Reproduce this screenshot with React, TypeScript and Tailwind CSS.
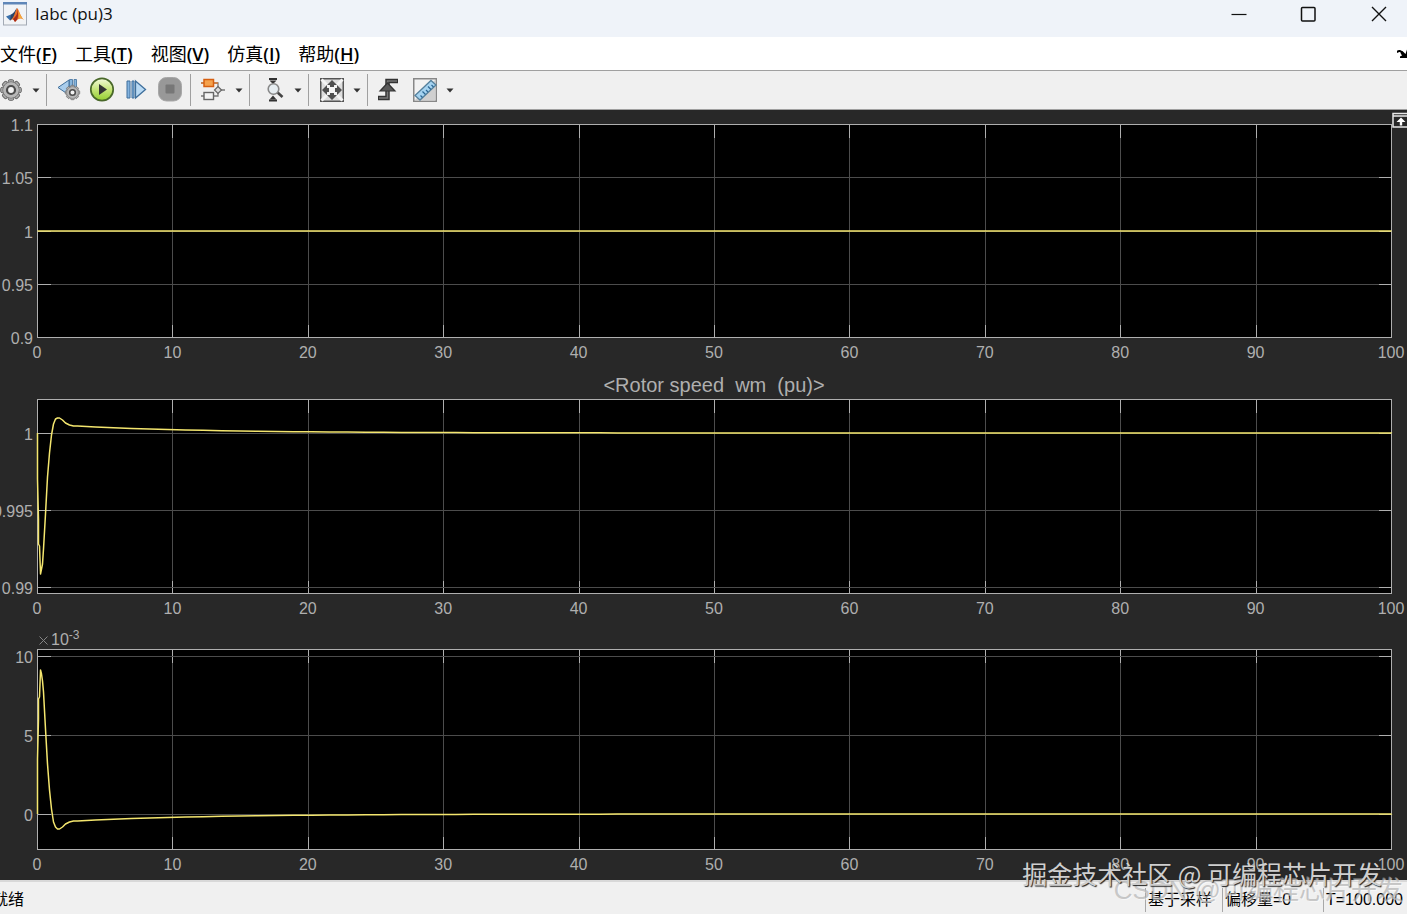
import type { ReactNode } from 'react';

type Point = [number, number];

interface ChartProps {
  label: string;
  height: number;
  yTicks: { label: string; y: number }[];
  points: Point[];
}

const X_TICKS = [0, 10, 20, 30, 40, 50, 60, 70, 80, 90, 100];
const CURVE_WIDTH = 1354;

/** Exponential settling towards a final value, sampled from x = 40 to the right edge. */
function settle(finalValue: number, amplitude: number): Point[] {
  return Array.from({ length: 74 }, (_, i): Point => {
    const x = 40 + i * 18;
    return [x, finalValue + amplitude * Math.exp(-(x - 40) / 130)];
  });
}

const ROTOR_SPEED: Point[] = [
  [0, 34], [0, 80], [1, 120], [1, 145], [2, 147], [3, 175], [4, 170], [5, 165], [6, 150], [8, 115], [10, 78], [12, 54], [14, 36],
  [16, 25], [18, 20], [20, 19], [22, 19], [25, 21], [28, 24], [32, 26], [36, 27],
  ...settle(34, -7), [1354, 34],
];

const DEVIATION: Point[] = [
  [0, 165], [0, 110], [1, 70], [1, 50], [2, 48], [3, 21], [4, 25], [5, 32], [6, 43], [8, 80], [10, 115], [12, 141], [14, 160],
  [16, 173], [18, 178], [20, 180], [22, 180], [25, 178], [28, 175], [32, 173], [36, 172],
  ...settle(165, 7), [1354, 165],
];

function Chart({ label, height, yTicks, points }: ChartProps) {
  return (
    <svg role="img" aria-label={label} className="block w-full overflow-visible" height={height + 1}>
      <g transform="translate(0.5 0.5)" shapeRendering="crispEdges">
        <rect width="100%" height={height} fill="#000" />
        {X_TICKS.slice(1, -1).map((x) => (
          <g key={x}>
            <line x1={`${x}%`} x2={`${x}%`} y1={0} y2={height} stroke="#4c4c4c" />
            <line x1={`${x}%`} x2={`${x}%`} y1={0} y2={13} stroke="#afafaf" />
            <line x1={`${x}%`} x2={`${x}%`} y1={height - 13} y2={height} stroke="#afafaf" />
          </g>
        ))}
        {yTicks.map(({ label: name, y }) => (
          <g key={name}>
            <line x1="0" x2="100%" y1={y} y2={y} stroke="#4c4c4c" />
            <line x1={0} x2={13} y1={y} y2={y} stroke="#afafaf" />
            <svg x="100%" overflow="visible">
              <line x1={-13} x2={0} y1={y} y2={y} stroke="#afafaf" />
            </svg>
          </g>
        ))}
        <rect width="100%" height={height} fill="none" stroke="#afafaf" />
      </g>
      <svg width="100%" height={height} viewBox={`0 0 ${CURVE_WIDTH} ${height}`} preserveAspectRatio="none" overflow="visible">
        <polyline
          transform="translate(0.5 0)"
          points={points.map((p) => p.join(',')).join(' ')}
          fill="none"
          stroke="#f4e66e"
          strokeWidth={1.5}
          strokeLinejoin="round"
          vectorEffect="non-scaling-stroke"
        />
      </svg>
      <g fill="#afafaf" className="font-['Liberation_Sans',sans-serif] text-base">
        {yTicks.map(({ label: name, y }) => (
          <text key={name} x={-4} y={y + 7} textAnchor="end">{name}</text>
        ))}
        {X_TICKS.map((x) => (
          <text key={x} x={`${x}%`} y={height + 21} textAnchor="middle">{x}</text>
        ))}
      </g>
    </svg>
  );
}

function ToolButton({ label, className = 'w-6', children }: { label: string; className?: string; children: ReactNode }) {
  return (
    <button type="button" aria-label={label} className={`flex h-7 shrink-0 items-center justify-center ${className}`}>
      {children}
    </button>
  );
}

function Caret({ label, className = 'ml-1.5' }: { label: string; className?: string }) {
  return (
    <button type="button" aria-label={label} className={`flex h-7 w-4 shrink-0 items-center justify-center ${className}`}>
      <svg width="8" height="5" viewBox="0 0 8 5"><path d="M0.5 0.5h7L4 4.5z" fill="#333" /></svg>
    </button>
  );
}

function Separator({ className = 'ml-0.5' }: { className?: string }) {
  return <div className={`h-8 w-px shrink-0 bg-[#a0a0a0] ${className}`} />;
}

const TEETH = [0, 45, 90, 135, 180, 225, 270, 315];

function Gear() {
  return (
    <>
      {TEETH.map((a) => (
        <rect key={a} x="-2.7" y="-10.3" width="5.4" height="5" rx="1.5" transform={`rotate(${a})`} fill="#b0b0b0" stroke="#6a6a6a" />
      ))}
      <circle r="8.2" fill="#b4b4b4" stroke="#777" />
      <circle r="7.6" fill="#b8b8b8" />
      <circle r="4" fill="#f3f3f3" stroke="#4c4c4c" strokeWidth="2.2" />
    </>
  );
}

function MatlabIcon() {
  return (
    <svg width="24" height="24" viewBox="0 0 24 24" className="shrink-0">
      <rect x="0.5" y="0.5" width="23" height="22.5" fill="#f1f3f6" stroke="#a3aab5" />
      <path d="M0 0h24v2.5H0z" fill="#5f86b8" />
      <path d="M3 14.5l5-2 3 3-4 3z" fill="#3a70ab" />
      <path d="M8 12.5c3-1 4-4.5 6-6.5l-3 9.5-4 3z" fill="#29456b" />
      <path d="M14 6c2 1 3 8 7 12-4-3-6-1-9 2-1-3-2-3-5-1.5 4-2 5-8.5 7-12.5z" fill="#e8702a" />
      <path d="M14 6c1 4 0 8-4 11l2 3c3-2 4-7 2-14z" fill="#a92b18" />
      <path d="M15 8.5c1 4 1 6.5 0 8.5 2-2 4-1 6 1-3-3-4-6-6-9.5z" fill="#f4ab37" />
    </svg>
  );
}

const MENUS = [
  { name: '文件', key: 'F' },
  { name: '工具', key: 'T' },
  { name: '视图', key: 'V' },
  { name: '仿真', key: 'I' },
  { name: '帮助', key: 'H' },
];

function TitleBar() {
  return (
    <header className="flex h-[37px] items-start justify-between bg-[#eff3f9]">
      <div className="flex items-center gap-2 pt-0.5 pl-[3px]">
        <MatlabIcon />
        <h1 className="font-['Open_Sans',sans-serif] text-[17px] leading-6 text-[#111]">Iabc (pu)3</h1>
      </div>
      <div className="flex pt-1.5 pr-5">
        <button type="button" aria-label="最小化" className="mr-[53px]">
          <svg width="16" height="16"><path d="M0.5 8.5h15" stroke="#111" strokeWidth="1.2" /></svg>
        </button>
        <button type="button" aria-label="最大化" className="mr-[55px]">
          <svg width="16" height="16"><rect x="1.5" y="1.5" width="13.5" height="13.5" rx="1" fill="none" stroke="#111" strokeWidth="1.5" /></svg>
        </button>
        <button type="button" aria-label="关闭">
          <svg width="16" height="16"><path d="M1 1l14 14M15 1L1 15" stroke="#111" strokeWidth="1.4" /></svg>
        </button>
      </div>
    </header>
  );
}

function MenuBar() {
  return (
    <nav className="flex h-[34px] items-center justify-between border-b border-[#a0a0a0] bg-white">
      <div className="flex gap-[18px]">
        {MENUS.map((m) => (
          <button key={m.key} type="button" className="font-['Open_Sans','Noto_Sans_CJK_SC',sans-serif] text-lg leading-6 text-black">
            {m.name}<span className="font-semibold">(<u className="decoration-1 underline-offset-2">{m.key}</u>)</span>
          </button>
        ))}
      </div>
      <button type="button" aria-label="停靠">
        <svg width="10" height="10" viewBox="0 0 10 10" className="block">
          <path d="M0 3.5C1.5 1 4 1.5 6 5" fill="none" stroke="#000" strokeWidth="2" />
          <path d="M10 0.5v8.5H3V7.5L5 6.500 3.500 4 5.500 2l3 3z" fill="#000" />
        </svg>
      </button>
    </nav>
  );
}

function Toolbar() {
  return (
    <div role="toolbar" className="flex h-[39px] items-center border-b border-[#a0a0a0] bg-[#f0f0f0]">
      <ToolButton label="配置属性" className="w-[22px]">
        <svg width="22" height="24" viewBox="-11 -12 22 24"><Gear /></svg>
      </ToolButton>
      <Caret label="配置属性选项" />
      <Separator />
      <ToolButton label="步进选项" className="ml-2.5 w-6">
        <svg width="24" height="24" viewBox="0 0 24 24">
          <path d="M1 9.5L12 2v15z" fill="#a9cdec" stroke="#3f6f9c" />
          <path d="M12.5 1.5h3v13h-3zM17 1.5h2.500v12H17z" fill="#86b5dc" stroke="#3f6f9c" strokeWidth="0.8" />
          <g transform="translate(15.5 14.5) scale(0.7)"><Gear /></g>
        </svg>
      </ToolButton>
      <ToolButton label="运行" className="ml-[9px] w-6">
        <svg width="26" height="26" viewBox="0 0 26 26" className="shrink-0">
          <defs>
            <linearGradient id="run" x1="0" y1="0" x2="0" y2="1">
              <stop offset="0" stopColor="#f4fadb" />
              <stop offset="0.5" stopColor="#c6e57a" />
              <stop offset="1" stopColor="#92cf2e" />
            </linearGradient>
          </defs>
          <circle cx="13" cy="12.5" r="11.2" fill="url(#run)" stroke="#49682a" strokeWidth="1.7" />
          <path d="M10 7v11l8-5.5z" fill="#333" />
        </svg>
      </ToolButton>
      <ToolButton label="步进" className="ml-2.5 w-6">
        <svg width="22" height="22" viewBox="0 0 22 22">
          <path d="M2 2h3v17H2zM7 2h2v17H7z" fill="#83b3df" stroke="#3f6f9c" />
          <path d="M10.5 2l10 8.500-10 8.500z" fill="#b9daf4" stroke="#3f6f9c" strokeWidth="1.3" />
        </svg>
      </ToolButton>
      <ToolButton label="停止" className="ml-2.5 w-6">
        <svg width="24" height="26" viewBox="0 0 24 26">
          <rect x="0.5" y="0.5" width="23" height="23.5" rx="8" fill="#989898" stroke="#a8a8a8" />
          <rect x="7.5" y="7.5" width="9" height="9" rx="1" fill="#777" />
        </svg>
      </ToolButton>
      <Separator className="ml-2" />
      <ToolButton label="突出显示模块" className="ml-2.5 w-6">
        <svg width="26" height="24" viewBox="0 0 26 24" className="shrink-0">
          <path d="M1 5h17v5M1 18h17v-4M21 12h4" fill="none" stroke="#777" strokeWidth="1.3" />
          <path d="M1 5h17" stroke="#e07a30" strokeWidth="1.3" />
          <rect x="4" y="1.5" width="9.5" height="7" fill="#f5a24d" stroke="#d65f11" strokeWidth="1.5" />
          <rect x="4" y="14.5" width="9.5" height="7" fill="#f4f4f4" stroke="#666" strokeWidth="1.4" />
          <path d="M18 8.5l3.5 3.5-3.5 3.5-3.5-3.5z" fill="#ddd" stroke="#666" strokeWidth="1.2" />
        </svg>
      </ToolButton>
      <Caret label="突出显示选项" />
      <Separator />
      <ToolButton label="缩放" className="ml-2.5 w-[30px]">
        <svg width="20" height="26" viewBox="0 0 20 26">
          <path d="M4 2h8M4 23.5h8" stroke="#333" strokeWidth="1.8" />
          <path d="M8 7L4.5 3.5h7zM8 18.500l-3.500 4h7z" fill="#333" />
          <path d="M12 15l5.5 5" stroke="#444" strokeWidth="2.6" />
          <circle cx="8.5" cy="12" r="5.3" fill="#e6edf1" stroke="#888" strokeWidth="1.6" />
        </svg>
      </ToolButton>
      <Caret label="缩放选项" className="ml-0" />
      <Separator />
      <ToolButton label="缩放至适合" className="ml-2.5 w-[26px]">
        <svg width="24" height="24" viewBox="0 0 24 24">
          <rect x="0.75" y="0.75" width="22.5" height="22.5" fill="#dedede" stroke="#555" strokeWidth="1.5" />
          <path d="M1.5 1.5l21 21M22.5 1.5l-21 21" stroke="#f4f4f4" strokeWidth="3" />
          <rect x="9" y="9" width="6" height="6" fill="#f4f4f4" />
          {[0, 90, 180, 270].map((a) => (
            <path key={a} d="M12 2l5 5h-3v2h-4V7H7z" transform={`rotate(${a} 12 12)`} fill="#505050" />
          ))}
        </svg>
      </ToolButton>
      <Caret label="适合选项" className="ml-1" />
      <Separator />
      <ToolButton label="触发器" className="ml-2 w-6">
        <svg width="22" height="24" viewBox="0 0 22 24">
          <path d="M1 20h9.5V3H21" fill="none" stroke="#333" strokeWidth="4.5" />
          <path d="M2 20h8.5V3H20" fill="none" stroke="#777" strokeWidth="1.6" />
          <path d="M10.5 5L18 13H3z" fill="#5a5a5a" stroke="#333" strokeWidth="1.2" />
        </svg>
      </ToolButton>
      <ToolButton label="测量" className="ml-[13px] w-6">
        <svg width="24" height="24" viewBox="0 0 24 24">
          <rect x="0.75" y="0.75" width="22.5" height="22.5" fill="#f2f2f2" stroke="#888" strokeWidth="1.5" />
          <path d="M1.5 22.5h21v-21z" fill="#d0d0d0" />
          <path d="M2 17.5L18 2.5l5 4.5L7 22z" fill="#a5d3f0" stroke="#55809c" strokeWidth="1.3" />
          <path d="M9.5 19.5l-2-2M12.5 16.5l-3-3M15 14l-2-2M18 11.5l-3-3M20.5 9l-2-2" stroke="#2c6794" strokeWidth="1.2" />
        </svg>
      </ToolButton>
      <Caret label="测量选项" className="ml-[5px]" />
    </div>
  );
}

export default function App() {
  return (
    <div className="relative flex min-h-screen flex-col overflow-hidden bg-[#f0f0f0]">
      <TitleBar />
      <MenuBar />
      <Toolbar />
      <main className="relative grow bg-[#282828] pt-3.5 pr-4 pb-[30px] pl-[37px]">
        <button type="button" aria-label="最大化坐标区" className="absolute top-0.5 right-0">
          <svg width="15" height="16" viewBox="0 0 15 16" className="block">
            <path d="M15 1.5H1v13.5h14M1 4h14" fill="none" stroke="#e8e8e8" strokeWidth="1.5" />
            <path d="M9 5.5l4.5 4.5h-3.3v3.5H7.800V10H4.500z" fill="#fff" />
          </svg>
        </button>
        <Chart
          label="1"
          height={213}
          yTicks={[
            { label: '1.1', y: 0 },
            { label: '1.05', y: 53 },
            { label: '1', y: 107 },
            { label: '0.95', y: 160 },
            { label: '0.9', y: 213 },
          ]}
          points={[[0, 107], [1354, 107]]}
        />
        <h2 className="mt-[35px] mb-0.5 text-center font-['Liberation_Sans',sans-serif] text-xl leading-6 whitespace-pre text-[#afafaf]">
          {'<Rotor speed  wm  (pu)>'}
        </h2>
        <Chart
          label="<Rotor speed  wm  (pu)>"
          height={194}
          yTicks={[
            { label: '1', y: 34 },
            { label: '0.995', y: 111 },
            { label: '0.99', y: 188 },
          ]}
          points={ROTOR_SPEED}
        />
        <p className="mt-8 mb-px flex h-[22px] items-center font-['Liberation_Sans',sans-serif] text-base leading-7 text-[#afafaf]">
          <svg width="9" height="9" viewBox="0 0 9 9" className="mt-1.5 mr-[3px] ml-0.5" role="img" aria-label="×">
            <path d="M0.5 0.5l8 8M8.5 0.5l-8 8" stroke="#858585" />
          </svg>
          <span className="pt-1.5">10<sup className="text-xs">-3</sup></span>
        </p>
        <Chart
          label="×10-3"
          height={200}
          yTicks={[
            { label: '10', y: 7 },
            { label: '5', y: 86 },
            { label: '0', y: 165 },
          ]}
          points={DEVIATION}
        />
      </main>
      <footer className="flex h-[34px] items-center justify-between border-t-2 border-[#d8d8d8] bg-[#f0f0f0] pt-1 font-['Liberation_Sans','Noto_Sans_CJK_SC',sans-serif] text-base leading-6 text-black">
        <span className="-ml-2">就绪</span>
        <div className="flex">
          <span className="w-[74px] border-l border-[#a8a8a8] pl-0.5">基于采样</span>
          <span className="ml-[3px] w-[98px] border-l border-[#a8a8a8] pl-0.5">偏移量=0</span>
          <span className="ml-[3px] w-[84px] border-l border-[#a8a8a8] pl-0.5">T=100.000</span>
        </div>
      </footer>
      <div className="pointer-events-none absolute right-1 bottom-1 font-['Liberation_Sans','Noto_Sans_CJK_SC',sans-serif] text-[26px] leading-10 whitespace-nowrap text-[#a8a8a8]/60 [text-shadow:1px_1px_0_rgba(255,255,255,0.5)]">
        CSDN @可编程芯片开发
      </div>
      <div className="pointer-events-none absolute right-[25px] bottom-[21px] font-['Noto_Sans_CJK_SC',sans-serif] text-[25px] leading-10 whitespace-nowrap text-[#cfcfcf] [text-shadow:1px_1px_1px_#222]">
        掘金技术社区 @ 可编程芯片开发
      </div>
    </div>
  );
}
